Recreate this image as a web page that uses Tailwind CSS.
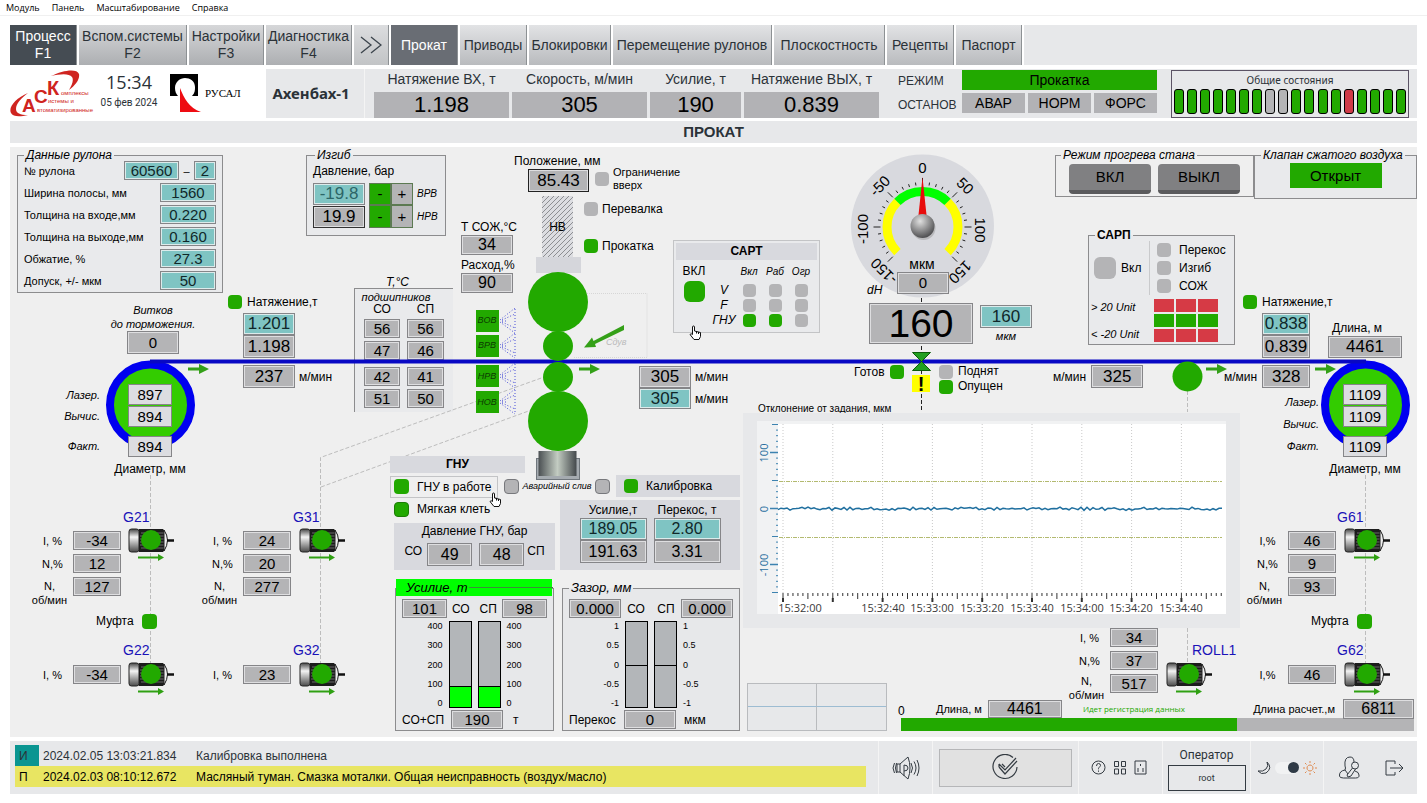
<!DOCTYPE html>
<html lang="ru">
<head>
  <meta charset="UTF-8">
  <meta name="viewport" content="width=device-width, initial-scale=1.0">
  <title>Ахенбах-1 - Прокат</title>
  <script src="https://cdn.jsdelivr.net/npm/@tailwindcss/browser@4"></script>
</head>
<body class="bg-white text-[#2b3238] font-['Liberation_Sans',sans-serif] min-h-screen">
  <!-- Menu -->
  <nav class="flex h-4 items-center gap-3 border-b border-[#f0f0f0] px-1.5 font-['Open_Sans',sans-serif] text-[9px] leading-4 text-black">
    <a href="#">Модуль</a>
    <a href="#">Панель</a>
    <a href="#">Масштабирование</a>
    <a href="#">Справка</a>
  </nav>

  <div class="px-[10px] pt-[9px]">
    <!-- Tabs -->
    <nav class="flex h-10 gap-0.5 text-[14px] leading-[17px] [&>button]:shrink-0 [&>button]:border-r [&>button]:border-[#8d9194] [&>button]:whitespace-nowrap">
      <button class="w-[67px] bg-[#454c53] text-white">Процесс<br>F1</button>
      <button class="w-[108px] bg-linear-to-b from-[#d6d7d9] to-[#adafb2]">Вспом.системы<br>F2</button>
      <button class="w-[75px] bg-linear-to-b from-[#d6d7d9] to-[#adafb2]">Настройки<br>F3</button>
      <button class="w-[86px] bg-linear-to-b from-[#d6d7d9] to-[#adafb2]">Диагностика<br>F4</button>
      <button class="flex w-[35px] items-center justify-center bg-linear-to-b from-[#dcdddf] to-[#c2c4c6]" aria-label="Далее">
        <svg width="22" height="18" viewBox="0 0 22 18" fill="none" stroke="#3b444c" stroke-width="1.3"><path d="M1 1l10 8-10 8M11 1l10 8-10 8"/></svg>
      </button>
      <button class="w-[67px] bg-[#696d74] text-white">Прокат</button>
      <button class="w-[67px] bg-linear-to-b from-[#e2e3e5] to-[#b9bbbe]">Приводы</button>
      <button class="w-[82px] bg-linear-to-b from-[#e2e3e5] to-[#b9bbbe]">Блокировки</button>
      <button class="w-[159px] bg-linear-to-b from-[#e2e3e5] to-[#b9bbbe]">Перемещение рулонов</button>
      <button class="w-[111px] bg-linear-to-b from-[#e2e3e5] to-[#b9bbbe]">Плоскостность</button>
      <button class="w-[67px] bg-linear-to-b from-[#e2e3e5] to-[#b9bbbe]">Рецепты</button>
      <button class="w-[66px] bg-linear-to-b from-[#e2e3e5] to-[#b9bbbe]">Паспорт</button>
      <div class="flex-1 bg-[#e7e8ea]"></div>
    </nav>

    <!-- Header -->
    <header class="mt-1 flex h-[49px]">
      <div class="flex w-[256px] shrink-0">
        <svg width="84" height="49" viewBox="0 0 84 49" fill="#cf2420" class="font-bold">
          <path d="M18 24C6 29-2 38 1 44c2 4 9 4 17 2-8 0-12-2-12-6 0-5 5-11 12-16z"/>
          <path d="M41 7C53 1 67-1 69 5c1 5-3 11-10 16 3-5 5-10 3-13-3-4-12-3-21-1z"/>
          <text x="12" y="43" font-size="19">А</text>
          <text x="24" y="34" font-size="19">С</text>
          <text x="37" y="26" font-size="20">К</text>
          <g font-size="6" font-weight="400">
            <text x="51" y="26">омплексы</text>
            <text x="38" y="34">истемы и</text>
            <text x="27" y="43">втоматизированные</text>
          </g>
        </svg>
        <div class="w-[70px] text-center">
          <p class="font-['Open_Sans',sans-serif] text-[18px] leading-[26px]">15:34</p>
          <p class="font-[Roboto,sans-serif] text-[10px] leading-4">05 фев 2024</p>
        </div>
        <div class="flex items-center gap-1 pl-1.5 text-black">
          <svg width="31" height="40" viewBox="0 0 31 40">
            <path d="M0 0h28v22h-6c3-3 3-6 3-9 0-6-5-9-10-9S5 8 5 14c0 3 1 6 3 8H0z"/>
            <path d="M10 14c4 10 9 20 21 24H10z" fill="#ee0c12"/>
          </svg>
          <span class="font-['Liberation_Serif',serif] text-[11px]">РУСАЛ</span>
        </div>
      </div>
      <div class="flex flex-1 bg-[#e7e8ea]">
        <div class="flex w-[99px] items-center justify-center border-r border-[#f4f4f4] pr-2 font-['Noto_Sans',sans-serif] text-[15px] font-bold">Ахенбах-1</div>
        <dl class="ml-[9px] grid grid-cols-[135px_135px_91px_135px] gap-x-[3px] text-center [&_dt]:pt-px [&_dt]:text-[14px] [&_dt]:leading-[18px] [&_dd]:mt-1 [&_dd]:h-[26px] [&_dd]:bg-[#b2b2b5] [&_dd]:text-[22px] [&_dd]:leading-[26px] [&_dd]:text-black">
          <div><dt>Натяжение ВХ, т</dt><dd>1.198</dd></div>
          <div><dt>Скорость, м/мин</dt><dd>305</dd></div>
          <div><dt>Усилие, т</dt><dd>190</dd></div>
          <div><dt>Натяжение ВЫХ, т</dt><dd>0.839</dd></div>
        </dl>
        <div class="ml-[19px] w-[64px] text-[12px] leading-6">
          <p>РЕЖИМ</p>
          <p>ОСТАНОВ</p>
        </div>
        <div class="grid w-[195px] grid-cols-3 grid-rows-[20px_20px] gap-[3px] pt-px text-center text-[14px] leading-5 text-black">
          <div class="col-span-3 bg-[#22a900]">Прокатка</div>
          <button class="bg-[#b2b2b5]">АВАР</button>
          <button class="bg-[#b2b2b5]">НОРМ</button>
          <button class="bg-[#b2b2b5]">ФОРС</button>
        </div>
        <div class="mt-px mr-2 ml-auto h-12 w-[238px] border border-[#5b5365]">
          <p class="text-center font-['Noto_Sans',sans-serif] text-[10px] leading-[18px]">Общие состояния</p>
          <div id="states" class="flex justify-between px-0.5"></div>
        </div>
      </div>
    </header>

    <h1 class="mt-[3px] bg-[#e7e8ea] text-center text-[15px] leading-[22px] font-bold">ПРОКАТ</h1>

    <!-- Mimic of the mill -->
    <main class="relative mt-1 h-[590px] min-w-[1407px] bg-[#efefef] text-[12px] leading-4 text-black
      [&_output]:flex [&_output]:items-center [&_output]:justify-center [&_output]:border [&_output]:border-[#858588] [&_output]:bg-[#b4b4b6] [&_output]:text-[15px] [&_output]:inset-ring [&_output]:inset-ring-[#dedee0]
      [&_input]:border [&_input]:border-[#858588] [&_input]:bg-[#7fc4c3] [&_input]:p-0 [&_input]:text-center [&_input]:text-[15px] [&_input]:text-[#10282a] [&_input]:inset-ring [&_input]:inset-ring-[#dcebeb]">

      <!-- Bearings -->
      <section class="absolute top-[127px] left-[344px] w-[99px] text-center">
        <h2 class="pr-3 italic">Т,°С</h2>
        <div class="-mt-0.5 border-t border-l border-[#8c8c8e] bg-[#e9eaec] pb-1">
          <p class="pr-4 text-[11px] italic">подшипников</p>
          <div class="grid grid-cols-[36px_37px] justify-center gap-x-[7px] gap-y-[3px]">
            <span class="-mt-1 -mb-px">СО</span><span class="-mt-1 -mb-px">СП</span>
            <output class="h-[19px]">56</output><output class="h-[19px]">56</output>
            <output class="h-[19px]">47</output><output class="h-[19px]">46</output>
            <output class="mt-1 h-[19px]">42</output><output class="mt-1 h-[19px]">41</output>
            <output class="h-[19px]">51</output><output class="h-[19px]">50</output>
          </div>
        </div>
      </section>

      <!-- Strip, rolls, reels, motors and gauge -->
      <svg class="pointer-events-none absolute top-0 left-0" width="1407" height="590" viewBox="10 147 1407 590">
        <defs>
          <linearGradient id="steel" x1="0" x2="0" y1="0" y2="1">
            <stop offset="0" stop-color="#444"/><stop offset=".35" stop-color="#f4f4f4"/><stop offset="1" stop-color="#4a4a4a"/>
          </linearGradient>
          <linearGradient id="piston">
            <stop offset="0" stop-color="#4b5053"/><stop offset=".5" stop-color="#c3ccc2"/><stop offset="1" stop-color="#44494c"/>
          </linearGradient>
          <radialGradient id="hub" cx=".4" cy=".3" r=".7">
            <stop offset="0" stop-color="#e0e0e0"/><stop offset="1" stop-color="#505052"/>
          </radialGradient>
          <pattern id="hatch" width="5" height="5" patternUnits="userSpaceOnUse">
            <rect width="5" height="5" fill="#dcdde1"/><path d="M0 5l5-5" stroke="#8d8e92"/>
          </pattern>
          <symbol id="motor" viewBox="0 0 46 40" width="46" height="40">
            <rect x="1" y="1" width="10" height="23" rx="2.500" fill="url(#steel)" stroke="#222"/>
            <path d="M11 1h24q4 4 4 11.500t-4 11.500h-24z" fill="#1c1c1c"/>
            <path d="M13 5h24M12 8h27M12 11h27M12 14h27M12 17h27M13 20h24" stroke="#7d7d7d" stroke-width=".8"/>
            <path d="M36 2q7 10 0 21z" fill="#eee" stroke="#222"/>
            <path d="M39 12.500h7" stroke="#111" stroke-width="2.500"/>
            <circle cx="23" cy="12" r="10" fill="#22a900"/>
            <path d="M10 29.500h21" stroke="#2fa012" stroke-width="2"/><path d="M30 26l6 3.500-6 3.500z" fill="#2fa012"/>
          </symbol>
          <symbol id="flow" viewBox="0 0 21 10" width="21" height="10">
            <path d="M0 3.500h11v-3.500l10 5-10 5v-3.500h-11z" fill="#34a018"/>
          </symbol>
          <symbol id="spray" viewBox="0 0 16 26" width="16" height="26">
            <path d="M0 12L15 0M2 12L15 6M2 13h6M2 14l13 6M0 14l15 11M15 1v24" fill="none" stroke="#4a50d8" stroke-dasharray="1 2"/>
          </symbol>
        </defs>

        <!-- drive links -->
        <g fill="none" stroke="#bdbdbd" stroke-dasharray="4 2">
          <path d="M150.500 475V665M320.500 665V457.500L558 372M321 487L545 405M1365.500 475V665M1187.500 391V412M1187.500 628V665"/>
        </g>
        <path d="M573 293.500H647V357.500H573" fill="none" stroke="#d6d6d6" stroke-dasharray="1 1"/>

        <!-- reels -->
        <g fill="#33cc00" stroke="#0000f0" stroke-width="8">
          <circle cx="150.500" cy="405" r="40.500"/><circle cx="1365.500" cy="405" r="40.500"/>
        </g>
        <path d="M150 361.500H1366" stroke="#0808c4" stroke-width="4"/>

        <!-- screw-down and rolls -->
        <rect x="542" y="196" width="31" height="61" fill="url(#hatch)"/>
        <text x="557.500" y="231" text-anchor="middle" font-size="12">НВ</text>
        <rect x="536" y="257" width="45" height="16" fill="#d5d6db"/>
        <rect x="536.500" y="458.500" width="43" height="21" fill="#a5abb0" stroke="#6f767c"/>
        <rect x="538.500" y="451" width="38" height="25" fill="url(#piston)"/>
        <g fill="#22a900">
          <circle cx="558" cy="302" r="30"/><circle cx="558" cy="346" r="15"/>
          <circle cx="558" cy="377" r="15"/><circle cx="558" cy="421" r="30"/>
          <circle cx="1187.500" cy="376.500" r="15"/>
        </g>
        <path d="M624 325v5l-29 14 1 3-12 .5 8-10 1.500 3.500z" fill="#34a018"/>
        <text x="606" y="345" font-size="9" font-style="italic" fill="#bbb">Сдув</text>
        <use href="#flow" x="188" y="364"/><use href="#flow" x="579" y="364"/>
        <use href="#flow" x="1206" y="364"/><use href="#flow" x="1315" y="364"/>

        <!-- coolant headers -->
        <use href="#spray" x="500" y="308"/><use href="#spray" x="500" y="333"/>
        <use href="#spray" x="500" y="363"/><use href="#spray" x="500" y="389"/>
        <path d="M476 310h23v22h-23zM476 335h23v22h-23zM476 365h23v22h-23zM476 391h23v22h-23z" fill="#22a900"/>
        <g font-size="9" font-style="italic" text-anchor="middle" fill="#0c3d00">
          <text x="487" y="323">ВОВ</text><text x="487" y="348">ВРВ</text>
          <text x="487" y="379">НРВ</text><text x="487" y="405">НОВ</text>
        </g>

        <!-- deviation gauge -->
        <circle cx="922.500" cy="226" r="71.500" fill="#d8d9de"/>
        <g fill="none" stroke-width="9">
          <path d="M897.400 201.900A35.500 35.500 0 0 0 897.400 252.100" stroke="#ff0"/>
          <path d="M947.600 201.900A35.500 35.500 0 0 1 947.600 252.100" stroke="#ff0"/>
          <path d="M897.400 201.900A35.500 35.500 0 0 1 947.600 201.900" stroke="#0f0"/>
        </g>
        <g id="gaugeTicks" stroke="#222"></g>
        <g font-size="15" text-anchor="middle">
          <text x="922.500" y="173">0</text>
          <text transform="translate(965 186) rotate(45)" y="5">50</text>
          <text transform="translate(980 230) rotate(90)" y="5">100</text>
          <text transform="translate(960 272) rotate(135)" y="5">150</text>
          <text transform="translate(880 186) rotate(-45)" y="5">-50</text>
          <text transform="translate(863 229) rotate(-90)" y="5">-100</text>
          <text transform="translate(884 271) rotate(-135)" y="5">-150</text>
          <text x="922" y="269" font-size="14">мкм</text>
        </g>
        <path d="M922.500 177l4 38h-8z" fill="#e80c0c"/>
        <circle cx="923.500" cy="228" r="12" fill="#999" opacity=".5"/>
        <circle cx="922.500" cy="226" r="12" fill="url(#hub)"/>
        <path d="M921.500 298V411" stroke="#222" stroke-dasharray="4 2"/>
        <path d="M912.500 352.500h18l-9 9zM912.500 370.500h18l-9-9z" fill="#22a020" stroke="#0d5c0a"/>
        <rect x="912" y="375" width="18" height="17" fill="#ff0"/>
        <text x="921" y="391" font-size="20" font-weight="700" text-anchor="middle">!</text>

        <!-- motors -->
        <use href="#motor" x="128" y="528"/><use href="#motor" x="128" y="662"/>
        <use href="#motor" x="299" y="528"/><use href="#motor" x="299" y="662"/>
        <use href="#motor" x="1344" y="528"/><use href="#motor" x="1344" y="662"/>
        <use href="#motor" x="1166" y="662"/>
      </svg>

      <!-- Coil data -->
      <fieldset class="absolute top-[2px] left-[7px] w-[206px] border border-[#8c8c8e] bg-[#e9eaec] px-[6px]">
        <legend class="px-0.5 leading-3 italic">Данные рулона</legend>
        <div class="grid auto-rows-[19px] grid-cols-[1fr_auto] items-center gap-y-[3px] pb-[2px] text-[11px] whitespace-nowrap">
          <label for="coil">№ рулона</label>
          <div class="-ml-9 flex items-center justify-between">
            <input id="coil" class="h-[19px] w-[55px]" value="60560">
            <span class="w-[15px] text-center">–</span>
            <input aria-label="Часть рулона" class="h-[19px] w-[22px]" value="2">
          </div>
          <label for="width">Ширина полосы, мм</label><input id="width" class="h-[19px] w-[56px] justify-self-end" value="1560">
          <label for="thIn">Толщина на входе,мм</label><input id="thIn" class="h-[19px] w-[56px] justify-self-end" value="0.220">
          <label for="thOut">Толщина на выходе,мм</label><input id="thOut" class="h-[19px] w-[56px] justify-self-end" value="0.160">
          <label for="red">Обжатие, %</label><input id="red" class="h-[19px] w-[56px] justify-self-end" value="27.3">
          <label for="tol">Допуск, +/- мкм</label><input id="tol" class="h-[19px] w-[56px] justify-self-end" value="50">
        </div>
      </fieldset>

      <!-- Bending -->
      <fieldset class="absolute top-[2px] left-[296px] w-[140px] border border-[#8c8c8e] bg-[#e9eaec] px-[6px] pb-[7px]">
        <legend class="ml-0.5 px-0.5 leading-3 italic">Изгиб</legend>
        <p class="pt-0.5 pb-1">Давление, бар</p>
        <div class="grid grid-cols-[52px_22px_22px_auto] grid-rows-[22px_23px] items-center [&>button]:h-full [&>button]:border [&>button]:border-[#5c7a52]">
          <input aria-label="Изгиб ВРВ" class="h-[22px] w-[52px] text-[17px]! text-[#2c6668]!" value="-19.8">
          <button class="ml-1 -mr-1 bg-[#22a900] text-[15px]">-</button><button class="ml-1 -mr-1 bg-[#b4b4b6] text-[15px]">+</button>
          <span class="ml-2 text-[10px] italic">ВРВ</span>
          <output class="h-[22px] border-[#333]! text-[17px]!">19.9</output>
          <button class="ml-1 -mr-1 bg-[#22a900] text-[15px]">-</button><button class="ml-1 -mr-1 bg-[#b4b4b6] text-[15px]">+</button>
          <span class="ml-2 text-[10px] italic">НРВ</span>
        </div>
      </fieldset>

      <!-- Position -->
      <section class="absolute top-[6px] left-[504px]">
        <p>Положение, мм</p>
        <output class="ml-3.5 h-[23px] w-[61px] border-[#222]! text-[17px]!">85.43</output>
      </section>
      <div class="absolute top-[19px] left-[585px] flex items-center gap-1 text-[11px] leading-[13px]">
        <span class="size-[14px] rounded bg-[#b4b4b6]"></span><span>Ограничение<br>вверх</span>
      </div>
      <div class="absolute top-[54px] left-[574px] grid gap-[21px]">
        <div class="flex items-center gap-1"><span class="size-[14px] rounded bg-[#b4b4b6]"></span>Перевалка</div>
        <div class="flex items-center gap-1"><span class="size-[14px] rounded bg-[#22a900]"></span>Прокатка</div>
      </div>

      <!-- Coolant -->
      <section class="absolute top-[72px] left-[451px]">
        <p>Т СОЖ,°С</p>
        <output class="h-[20px] w-[52px] text-[16px]!">34</output>
        <p class="pt-0.5">Расход,%</p>
        <output class="h-[20px] w-[52px] text-[16px]!">90</output>
      </section>

      <!-- Entry tension -->
      <div class="absolute top-[147px] left-[218px] flex items-center gap-[5px]">
        <span class="size-[14px] rounded bg-[#22a900]"></span><label for="tenIn">Натяжение,т</label>
      </div>
      <div class="absolute top-[166px] left-[233px] w-[52px]">
        <input id="tenIn" class="block h-[22px] w-full text-[17px]!" value="1.201">
        <output class="h-[23px] text-[17px]!">1.198</output>
      </div>
      <div class="absolute top-[218px] left-[233px] flex items-center gap-1">
        <output class="h-[23px] w-[52px] text-[17px]!">237</output>м/мин
      </div>
      <section class="absolute top-[156px] left-[93px] w-[100px] text-center text-[11px] leading-[14px] italic">
        <p>Витков<br>до торможения.</p>
        <output class="mx-auto h-[23px] w-[52px] not-italic">0</output>
      </section>

      <!-- Reel diameters -->
      <section class="absolute top-[237px] left-[50px] grid grid-cols-[40px_44px] items-center gap-x-7 text-right text-[11px] italic">
        <span>Лазер.</span><output class="h-[21px] bg-[#dcdde1]! not-italic">897</output>
        <span>Вычис.</span><output class="mt-px h-[21px] bg-[#dcdde1]! not-italic">894</output>
        <span class="mt-2">Факт.</span><output class="mt-[9px] h-[21px] bg-[#dcdde1]! not-italic">894</output>
      </section>
      <p class="absolute top-[314px] left-[95px] w-[90px] text-center">Диаметр, мм</p>
      <section class="absolute top-[237px] left-[1333px] w-[44px]">
        <output class="h-[21px] bg-[#dcdde1]!">1109</output>
        <output class="mt-px h-[21px] bg-[#dcdde1]!">1109</output>
        <output class="mt-[9px] h-[21px] bg-[#dcdde1]!">1109</output>
      </section>
      <div class="absolute top-[244px] left-[1269px] w-10 text-right text-[11px] leading-[22px] italic">
        <p>Лазер.</p><p>Вычис.</p><p>Факт.</p>
      </div>
      <p class="absolute top-[314px] left-[1310px] w-[90px] text-center">Диаметр, мм</p>

      <!-- САРТ -->
      <section class="absolute top-[93px] left-[663px] w-[147px] border border-[#c3c4c6] bg-[#e9eaec] p-0.5 pb-1">
        <h2 class="bg-[#d8d9de] text-center text-[12px] leading-[17px] font-bold">САРТ</h2>
        <div class="grid grid-cols-[36px_24px_26px_26px_26px] items-center justify-items-center pt-1 text-[10px] leading-[15px] italic">
          <span class="mb-1 text-[12px] not-italic">ВКЛ</span><span></span><span class="mb-1">Вкл</span><span class="mb-1">Раб</span><span class="mb-1">Огр</span>
          <span class="row-span-3 -mt-0.5 size-[21px] self-start rounded-md bg-[#22a900]"></span>
          <span class="text-[12px]">V</span><span class="size-[13px] rounded bg-[#b4b4b6]"></span><span class="size-[13px] rounded bg-[#b4b4b6]"></span><span class="size-[13px] rounded bg-[#b4b4b6]"></span>
          <span class="text-[12px]">F</span><span class="size-[13px] rounded bg-[#b4b4b6]"></span><span class="size-[13px] rounded bg-[#b4b4b6]"></span><span class="size-[13px] rounded bg-[#b4b4b6]"></span>
          <span class="text-[12px]">ГНУ</span><span class="size-[13px] rounded bg-[#22a900]"></span><span class="size-[13px] rounded bg-[#22a900]"></span><span class="size-[13px] rounded bg-[#b4b4b6]"></span>
        </div>
      </section>

      <!-- Speed at the stand -->
      <div class="absolute top-[219px] left-[629px] grid grid-cols-[52px_auto] items-center gap-x-1">
        <output class="h-[22px] text-[17px]!">305</output><span>м/мин</span>
        <input aria-label="Задание скорости" class="h-[21px] w-[52px] text-[17px]!" value="305"><span>м/мин</span>
      </div>

      <!-- Thickness -->
      <output class="absolute top-[125px] left-[887px] h-[22px] w-[52px]">0</output>
      <span class="absolute top-[135px] left-[857px] italic">dH</span>
      <output class="absolute top-[156px] left-[859px] h-[41px] w-[104px] text-[39px]!">160</output>
      <div class="absolute top-[158px] left-[970px] w-[52px] text-center">
        <input id="target" class="block h-[23px] w-full text-[17px]!" value="160">
        <label for="target" class="text-[11px] italic">мкм</label>
      </div>
      <div class="absolute top-[217px] left-[844px] flex items-center gap-[5px]">Готов<span class="size-[14px] rounded bg-[#22a900]"></span></div>
      <div class="absolute top-[217px] left-[929px] grid leading-[15px]">
        <div class="flex items-center gap-[5px]"><span class="size-[14px] rounded bg-[#b4b4b6]"></span>Поднят</div>
        <div class="flex items-center gap-[5px]"><span class="size-[14px] rounded bg-[#22a900]"></span>Опущен</div>
      </div>

      <!-- Warm-up -->
      <fieldset class="absolute top-[2px] left-[1045px] flex w-[191px] gap-[7px] border border-[#8c8c8e] px-[13px] pt-[3px] pb-0.5">
        <legend class="-ml-2 px-0.5 leading-3 italic">Режим прогрева стана</legend>
        <button class="h-[30px] w-[82px] rounded border-b-4 border-[#5a5a5c] bg-[#808082] text-[15px]">ВКЛ</button>
        <button class="h-[30px] w-[82px] rounded border-b-4 border-[#5a5a5c] bg-[#808082] text-[15px]">ВЫКЛ</button>
      </fieldset>
      <fieldset class="absolute top-[2px] left-[1244px] w-[163px] border border-[#8c8c8e] bg-[#e9eaec] pb-[10px]">
        <legend class="ml-[6px] px-0.5 leading-3 whitespace-nowrap italic">Клапан сжатого воздуха</legend>
        <div class="mx-auto mt-0.5 h-[25px] w-[92px] bg-[#22a900] text-center text-[15px] leading-[25px]">Открыт</div>
      </fieldset>

      <!-- САРП -->
      <fieldset class="absolute top-[82px] left-[1078px] w-[147px] border border-[#8c8c8e] bg-[#e9eaec] pb-[2px]">
        <legend class="ml-[6px] px-0.5 leading-3 font-bold">САРП</legend>
        <div class="flex">
          <div class="flex w-[61px] items-center gap-[5px] border-r border-[#c9cacc] pl-[5px]">
            <span class="size-[22px] rounded-md bg-[#b4b4b6]"></span>Вкл
          </div>
          <div class="ml-[7px] grid leading-[18px]">
            <div class="flex items-center gap-2"><span class="size-[14px] rounded bg-[#b4b4b6]"></span>Перекос</div>
            <div class="flex items-center gap-2"><span class="size-[14px] rounded bg-[#b4b4b6]"></span>Изгиб</div>
            <div class="flex items-center gap-2"><span class="size-[14px] rounded bg-[#b4b4b6]"></span>СОЖ</div>
          </div>
        </div>
        <div class="mt-1 flex gap-1 pl-0.5 text-[11px] italic">
          <div class="flex w-[59px] flex-col justify-between"><span>&gt; 20 Unit</span><span>&lt; -20 Unit</span></div>
          <div class="grid grid-cols-[20px_20px_20px] grid-rows-[13px_13px_13px] gap-0.5">
            <i class="bg-[#d63a45]"></i><i class="bg-[#d63a45]"></i><i class="bg-[#d63a45]"></i>
            <i class="bg-[#22a900]"></i><i class="bg-[#22a900]"></i><i class="bg-[#22a900]"></i>
            <i class="bg-[#d63a45]"></i><i class="bg-[#d63a45]"></i><i class="bg-[#d63a45]"></i>
          </div>
        </div>
      </fieldset>

      <!-- Exit tension -->
      <div class="absolute top-[147px] left-[1233px] flex items-center gap-[5px]">
        <span class="size-[14px] rounded bg-[#22a900]"></span><label for="tenOut">Натяжение,т</label>
      </div>
      <div class="absolute top-[166px] left-[1252px] w-[48px]">
        <input id="tenOut" class="block h-[22px] w-full text-[17px]!" value="0.838">
        <output class="h-[23px] text-[17px]!">0.839</output>
      </div>
      <div class="absolute top-[218px] left-[1043px] flex items-center gap-[5px]">м/мин<output class="h-[23px] w-[52px] text-[17px]!">325</output></div>
      <div class="absolute top-[218px] left-[1214px] flex items-center gap-[5px]">м/мин<output class="h-[23px] w-[48px] text-[17px]!">328</output></div>
      <section class="absolute top-[173px] left-[1318px] w-[74px]">
        <p class="pl-1">Длина, м</p>
        <output class="h-[22px] text-[17px]!">4461</output>
      </section>

      <!-- Motor readouts -->
      <span class="absolute top-[362px] left-[113px] text-[14px] text-[#1a12b8]">G21</span>
      <section class="absolute top-[384px] left-[20px] grid grid-cols-[39px_48px] gap-x-1 gap-y-[3px] text-center text-[11px] leading-5">
        <span class="pl-1.5">I, %</span><output class="h-[19px]">-34</output>
        <span class="pl-1.5">N,%</span><output class="h-[19px]">12</output>
        <span class="-mb-4 pt-0.5 leading-[14px]">N,<br>об/мин</span><output class="h-[19px]">127</output>
      </section>
      <div class="absolute top-[466px] left-[86px] flex items-center gap-2">Муфта<span class="size-[15px] rounded bg-[#22a900]"></span></div>
      <span class="absolute top-[495px] left-[113px] text-[14px] text-[#1a12b8]">G22</span>
      <div class="absolute top-[518px] left-[20px] grid grid-cols-[39px_48px] items-center gap-x-1 text-center text-[11px]"><span class="pl-1.5">I, %</span><output class="h-[19px]">-34</output></div>

      <span class="absolute top-[362px] left-[283px] text-[14px] text-[#1a12b8]">G31</span>
      <section class="absolute top-[384px] left-[190px] grid grid-cols-[39px_48px] gap-x-1 gap-y-[3px] text-center text-[11px] leading-5">
        <span class="pl-1.5">I, %</span><output class="h-[19px]">24</output>
        <span class="pl-1.5">N,%</span><output class="h-[19px]">20</output>
        <span class="-mb-4 pt-0.5 leading-[14px]">N,<br>об/мин</span><output class="h-[19px]">277</output>
      </section>
      <span class="absolute top-[495px] left-[283px] text-[14px] text-[#1a12b8]">G32</span>
      <div class="absolute top-[518px] left-[190px] grid grid-cols-[39px_48px] items-center gap-x-1 text-center text-[11px]"><span class="pl-1.5">I, %</span><output class="h-[19px]">23</output></div>

      <span class="absolute top-[362px] left-[1327px] text-[14px] text-[#1a12b8]">G61</span>
      <section class="absolute top-[384px] left-[1235px] grid grid-cols-[39px_48px] gap-x-1 gap-y-[3px] text-center text-[11px] leading-5">
        <span class="pl-1.5">I,%</span><output class="h-[19px]">46</output>
        <span class="pl-1.5">N,%</span><output class="h-[19px]">9</output>
        <span class="-mb-4 pt-0.5 leading-[14px]">N,<br>об/мин</span><output class="h-[19px]">93</output>
      </section>
      <div class="absolute top-[466px] left-[1301px] flex items-center gap-2">Муфта<span class="size-[15px] rounded bg-[#22a900]"></span></div>
      <span class="absolute top-[495px] left-[1327px] text-[14px] text-[#1a12b8]">G62</span>
      <div class="absolute top-[518px] left-[1235px] grid grid-cols-[39px_48px] items-center gap-x-1 text-center text-[11px]"><span class="pl-1.5">I,%</span><output class="h-[19px]">46</output></div>

      <span class="absolute top-[495px] left-[1182px] text-[14px] text-[#1a12b8]">ROLL1</span>
      <section class="absolute top-[481px] left-[1057px] grid grid-cols-[39px_48px] gap-x-1 gap-y-[3px] text-center text-[11px] leading-5">
        <span class="pl-1.5">I, %</span><output class="h-[19px]">34</output>
        <span class="pl-1.5">N,%</span><output class="h-[19px]">37</output>
        <span class="-mb-4 leading-[14px]">N,<br>об/мин</span><output class="h-[19px]">517</output>
      </section>

      <!-- Roll gap control -->
      <section class="absolute top-[309px] left-[380px] w-[350px] pb-1">
        <h2 class="w-[135px] bg-[#d8d9de] text-center text-[12px] leading-[17px] font-bold">ГНУ</h2>
        <div class="mt-0.5 flex h-[22px] items-center">
          <div class="mt-px flex h-[22px] w-[108px] items-center gap-2 border border-[#c3c4c6] pl-[3px]"><span class="size-[15px] shrink-0 rounded bg-[#22a900]"></span><span class="whitespace-nowrap">ГНУ в работе</span></div>
          <div class="flex flex-1 items-center justify-between px-[6px] text-[9px] whitespace-nowrap italic">
            <span class="size-[15px] rounded border border-[#77787c] bg-[#b4b4b6]"></span>Аварийный слив<span class="size-[15px] rounded border border-[#77787c] bg-[#b4b4b6]"></span>
          </div>
          <div class="flex h-[22px] w-[124px] items-center gap-2 bg-[#d8d9de] pl-2"><span class="size-[14px] rounded bg-[#22a900]"></span>Калибровка</div>
        </div>
        <div class="flex justify-between pt-[3px] pl-1">
          <div class="w-[161px]">
            <div class="flex h-[18px] items-center gap-2"><span class="size-[15px] rounded border border-[#1c7d05] bg-[#22a900]"></span>Мягкая клеть</div>
            <div class="mt-[5px] h-[47px] bg-[#d8d9de] text-center">
              <p>Давление ГНУ, бар</p>
              <div class="flex justify-center gap-[3px] pt-1"><span>СО</span><output class="mx-0.5 h-[23px] w-[45px] text-[16px]!">49</output><output class="ml-0.5 h-[23px] w-[45px] text-[16px]!">48</output><span>СП</span></div>
            </div>
          </div>
          <div class="grid w-[180px] grid-cols-[67px_67px] grid-rows-[18px_22px_23px] justify-center gap-x-[7px] bg-[#d8d9de] pb-[5px] text-center">
            <label for="force" class="leading-[20px]">Усилие,т</label><label for="skew" class="leading-[20px]">Перекос, т</label>
            <input id="force" class="w-full text-[16px]!" value="189.05"><input id="skew" class="w-full text-[16px]!" value="2.80">
            <output class="text-[16px]!">191.63</output><output class="text-[16px]!">3.31</output>
          </div>
        </div>
        <div class="flex justify-between pt-[12px] pl-[5px]">
          <fieldset class="relative h-[149px] w-[159px] border border-[#8c8c8e] bg-[#e7e8ea] px-1.5">
            <legend class="relative z-10 ml-0.5 px-0.5 text-[13px] leading-3 italic">Усилие, т</legend>
            <div class="absolute -top-[15px] left-0 h-[17px] w-[156px] bg-[#00ff00]"></div>
            <div class="absolute -top-[7px] right-0 w-[84px] border-t border-[#3c8c3c]"></div>
            <div class="grid grid-cols-[45px_1fr_1fr_45px] items-center pt-[5px] text-center"><output class="h-[19px]">101</output><span>СО</span><span>СП</span><output class="h-[19px]">98</output></div>
            <div class="mt-[3px] grid grid-cols-[1fr_23px_23px_1fr] gap-x-[6px] text-[9px]">
              <div class="flex flex-col justify-between text-right leading-[10px]"><span>400</span><span>300</span><span>200</span><span>100</span><span>0</span></div>
              <div class="flex h-[87px] flex-col justify-end border border-black bg-[#b3b6b9]"><div class="border-t border-black bg-[#00ff00]" style="height: 25%"></div></div>
              <div class="flex h-[87px] flex-col justify-end border border-black bg-[#b3b6b9]"><div class="border-t border-black bg-[#00ff00]" style="height: 25%"></div></div>
              <div class="flex flex-col justify-between leading-[10px]"><span>400</span><span>300</span><span>200</span><span>100</span><span>0</span></div>
            </div>
            <div class="mt-0.5 grid grid-cols-[49px_52px_1fr] items-center"><span>СО+СП</span><output class="h-[19px]">190</output><span class="pl-2.5">т</span></div>
          </fieldset>
          <fieldset class="h-[149px] w-[178px] border border-[#8c8c8e] bg-[#e7e8ea] px-1.5">
            <legend class="px-0.5 text-[13px] leading-3 italic">Зазор, мм</legend>
            <div class="grid grid-cols-[52px_1fr_1fr_52px] items-center pt-[5px] text-center"><output class="h-[19px]">0.000</output><span>СО</span><span>СП</span><output class="h-[19px]">0.000</output></div>
            <div class="mt-[3px] grid grid-cols-[1fr_23px_23px_1fr] gap-x-[6px] text-[9px]">
              <div class="flex flex-col justify-between text-right leading-[10px]"><span>1</span><span>0.5</span><span>0</span><span>-0.5</span><span>-1</span></div>
              <div class="flex h-[87px] flex-col justify-end border border-black bg-[#b3b6b9]"><div class="border-t border-black" style="height: 50%"></div></div>
              <div class="flex h-[87px] flex-col justify-end border border-black bg-[#b3b6b9]"><div class="border-t border-black" style="height: 50%"></div></div>
              <div class="flex flex-col justify-between leading-[10px]"><span>1</span><span>0.5</span><span>0</span><span>-0.5</span><span>-1</span></div>
            </div>
            <div class="mt-0.5 grid grid-cols-[55px_52px_1fr] items-center"><span>Перекос</span><output class="h-[19px]">0</output><span class="pl-2">мкм</span></div>
          </fieldset>
        </div>
      </section>

      <!-- Deviation chart -->
      <h2 class="absolute top-[256px] left-[748px] text-[10px] leading-3">Отклонение от задания, мкм</h2>
      <section class="absolute top-[266px] left-[733px] bg-[#e7e8ea] px-[14px] pt-2 pb-[14px]">
        <svg class="overflow-visible" width="469" height="193" viewBox="757 421 469 193">
          <rect x="757" y="421" width="469" height="193" fill="#f1f2f3"/>
          <rect x="778" y="424" width="448" height="190" fill="#fff"/>
          <g id="grid" stroke="#c9c9c9" stroke-dasharray="1 2"></g>
          <path d="M779 481.500H1222M779 537.500H1222" stroke="#b3ba70" stroke-dasharray="4 1 1 1"/>
          <g id="ticksY" stroke="#3d83b0"></g>
          <g id="ticksX" stroke="#333"></g>
          <polyline id="trend" fill="none" stroke="#1f6f9f" stroke-width="1.500"/>
          <g class="font-['Open_Sans',sans-serif]" font-size="11" text-anchor="middle" fill="#3a3a3a">
            <text x="800" y="612">15:32:00</text><text x="883" y="612">15:32:40</text><text x="932" y="612">15:33:00</text>
            <text x="982" y="612">15:33:20</text><text x="1032" y="612">15:33:40</text><text x="1082" y="612">15:34:00</text>
            <text x="1131" y="612">15:34:20</text><text x="1181" y="612">15:34:40</text>
          </g>
          <g class="font-['Open_Sans',sans-serif]" font-size="11" text-anchor="middle" fill="#2a6f9f">
            <text transform="translate(768 453) rotate(-90)">100</text><text transform="translate(768 509) rotate(-90)">0</text><text transform="translate(768 565) rotate(-90)">-100</text>
          </g>
        </svg>
      </section>

      <!-- Flatness preview -->
      <div class="absolute top-[536px] left-[737px] grid h-[48px] w-[140px] grid-cols-2 grid-rows-2 border border-[#b9bbbe] bg-[#e7e8ea]">
        <i class="border-r border-b border-r-[#b9bbbe] border-b-[#9dbcd2]"></i><i class="border-b border-[#9dbcd2]"></i><i class="border-r border-[#b9bbbe]"></i>
      </div>

      <!-- Length progress -->
      <section class="absolute top-[552px] left-[888px] w-[516px]">
        <div class="flex h-[19px] items-center text-[11px]">
          <span class="w-[38px] pt-1 text-[12px]">0</span>Длина, м
          <output class="ml-[6px] h-[18px] w-[74px] text-[16px]!">4461</output>
          <span class="ml-[21px] font-['Open_Sans',sans-serif] text-[8px] text-[#22a900]">Идет регистрация данных</span>
          <span class="ml-auto">Длина расчет.,м</span>
          <output class="ml-2 h-[20px] w-[71px] text-[16px]!">6811</output>
        </div>
        <div class="ml-[3px] h-[13px] bg-[#b4b4b6]" role="progressbar" aria-label="Длина" aria-valuenow="4461" aria-valuemax="6811"><div class="h-full bg-[#22a900]" style="width: 65.5%"></div></div>
      </section>

      <!-- Hand marks -->
      <svg class="absolute top-[178px] left-[679px]" width="13" height="15" viewBox="0 0 13 15" fill="#fff" stroke="#111"><path d="M3.500 9V2q0-1 1-1t1 1v4l6 1.500v4l-1.500 3h-5l-4-5q1-1.500 2.500 0zM7.500 6.500v2M9.500 7v2"/></svg>
      <svg class="absolute top-[345px] left-[479px]" width="13" height="15" viewBox="0 0 13 15" fill="#fff" stroke="#111"><path d="M3.500 9V2q0-1 1-1t1 1v4l6 1.500v4l-1.500 3h-5l-4-5q1-1.500 2.500 0zM7.500 6.500v2M9.500 7v2"/></svg>
    </main>

    <!-- Footer -->
    <footer class="mt-1 flex h-[53px] min-w-[1407px] bg-[#e7e8ea] text-[12px]">
      <table class="mt-1 ml-[5px] h-[42px] w-[851px] shrink-0 table-fixed text-left">
        <tbody>
          <tr class="h-[21px]"><td class="w-[24px] bg-[#0a9591] pl-1">И</td><td class="w-[157px] pl-1">2024.02.05 13:03:21.834</td><td>Калибровка выполнена</td></tr>
          <tr class="h-[21px] bg-[#e8e562] text-black"><td class="pl-1">П</td><td class="pl-1">2024.02.03 08:10:12.672</td><td>Масляный туман. Смазка моталки. Общая неисправность (воздух/масло)</td></tr>
        </tbody>
      </table>
      <div class="ml-3 flex flex-1 [&>div]:flex [&>div]:items-center [&>div]:justify-center [&>div]:border-l [&>div]:border-[#f4f4f4] [&_svg]:fill-none [&_svg]:stroke-[#343b42]">
        <div class="w-[54px]">
          <button aria-label="Звук">
            <svg width="29" height="24" viewBox="0 0 29 24"><path d="M6 8h3l8-7q4 11 0 22l-8-7H6zM3.500 7Q.5 12 3.500 17M5.500 7q-2 5 0 10M9 8v8M13 9v11M13 9q4 0 4 3t-4 3M20 7q3 5 0 10M23 5.500q4 6.500 0 13M26 4q4 8 0 16"/></svg>
          </button>
        </div>
        <div class="w-[146px]">
          <button aria-label="Квитировать" class="flex h-[38px] w-[133px] items-center justify-center border border-[#b5b6b8] bg-[#e1e1e1]">
            <svg width="27" height="27" viewBox="0 0 27 27" stroke-width="1.200"><path d="M21 3.500A12 12 0 1 0 25 13"/><path d="M7 13l6 7L25 7M7 10l6 6L24 4M7 10v3M10 10l3 3"/></svg>
          </button>
        </div>
        <div class="w-[84px] gap-[7px] pr-1">
          <button aria-label="Помощь"><svg width="15" height="15" viewBox="0 0 15 15"><circle cx="7.500" cy="7.500" r="6.500"/><path d="M5.500 6q0-2.500 2-2.500t2 2q0 1-1 1.500t-1 1.500v.8M7.500 10.500v1.300"/></svg></button>
          <button aria-label="Окна"><svg width="14" height="15" viewBox="0 0 14 15"><path d="M1.500 1.500h4v5h-4zM8.500 1.500h4v5h-4zM1.500 9h4v5h-4zM8.500 9h4v5h-4z"/></svg></button>
          <button aria-label="Тренды"><svg width="13" height="15" viewBox="0 0 13 15"><path d="M1 1h11v13H1zM4 8v4M9 8v4M6.500 4v2"/></svg></button>
        </div>
        <div class="w-[88px] flex-col">
          <label for="user" class="font-[Roboto,sans-serif] text-[12px] leading-[20px]">Оператор</label>
          <input id="user" class="h-[26px] w-[78px] border border-[#343b42] text-center font-[Roboto,sans-serif] text-[9px]" value="root">
        </div>
        <div class="w-[73px] gap-1">
          <svg width="14" height="14" viewBox="0 0 14 14"><path d="M10 1q6 6-1 11-5 2-8-2 5 1 8-2t1-7z"/></svg>
          <label class="relative flex h-3 w-6 items-center rounded-full bg-[#f1f2f3]"><input type="checkbox" checked aria-label="Светлая тема" class="peer absolute inset-0 opacity-0"><span class="ml-auto size-[11px] rounded-full bg-[#2f3a46]"></span></label>
          <svg width="14" height="14" viewBox="0 0 14 14"><path class="stroke-[#e08a50]" d="M7 4a3 3 0 1 0 .01 0M7 0v2M7 12v2M0 7h2M12 7h2M2 2l1.500 1.500M10.500 10.500L12 12M2 12l1.500-1.500M10.500 3.500L12 2"/></svg>
        </div>
        <div class="flex-1 gap-6">
          <button aria-label="Пользователь"><svg width="23" height="24" viewBox="0 0 23 24"><path d="M7 14Q1 15 1.500 20q0 2 4 2h12q4 0 3.500-3 0-3-4-4M7 14q1-2 0-4-1-9 5-9 4 0 4 5M7 14l3 4"/><circle cx="17" cy="9.500" r="3.500"/><path d="M14.500 12l-5.500 7 1 2 3-1 4.500-7"/></svg></button>
          <button aria-label="Выход"><svg width="19" height="16" viewBox="0 0 19 16"><path d="M10 4V1H1v14h9v-3M5 8h13M14 4l4 4-4 4"/></svg></button>
        </div>
      </div>
    </footer>
  </div>

  <script>
    // overall state lamps: g - ok, n - off, r - alarm
    const lamps = {
      g: "h-[25px] w-[10px] rounded-[3px] border border-black bg-[#22a900]",
      n: "h-[25px] w-[10px] rounded-[3px] border border-black bg-[#b4b4b6]",
      r: "h-[25px] w-[10px] rounded-[3px] border border-black bg-[#d03a48]"
    };
    document.getElementById("states").innerHTML =
      [..."gggggggnnggggrgggg"].map(s => `<span class="${lamps[s]}"></span>`).join("");

    const line = (x1, y1, x2, y2, w) => `<line x1="${x1}" y1="${y1}" x2="${x2}" y2="${y2}" stroke-width="${w || 1}"/>`;

    // gauge scale, -150..150 over 270 degrees
    let ticks = "";
    for (let v = -150; v <= 150; v += 10) {
      const a = v * 0.9 * Math.PI / 180;
      const r = v % 50 === 0 ? 49 : 45;
      ticks += line(922.5 + 42 * Math.sin(a), 227 - 42 * Math.cos(a), 922.5 + r * Math.sin(a), 227 - r * Math.cos(a));
    }
    document.getElementById("gaugeTicks").innerHTML = ticks;

    // chart axes
    let ty = "";
    for (let i = 0; i <= 30; i++) {
      const y = 424.5 + i * 5.6;
      const label = i === 5 || i === 15 || i === 25;
      ty += line(label ? 770 : i % 5 === 0 ? 772 : 776, y, 778, y, label ? 1.5 : 1);
    }
    document.getElementById("ticksY").innerHTML = ty;

    let tx = "";
    let grid = "";
    for (let i = 0; i < 90; i++) {
      const x = 783 + i * 4.98;
      if (x > 1224) break;
      tx += line(x, 593, x, i % 5 === 0 ? 599 : 596);
      if (i % 10 === 0) {
        tx += line(x, 598, x, 602, 2);
        grid += line(x, 424, x, 594);
      }
    }
    document.getElementById("ticksX").innerHTML = tx;
    document.getElementById("grid").innerHTML = grid;

    // thickness deviation stays within a few microns of the target
    const points = [];
    for (let x = 778; x <= 1222; x += 3) {
      points.push(x + "," + (508.7 + Math.sin(x * 0.9) * 0.8 + Math.sin(x * x * 0.013) * 0.8).toFixed(1));
    }
    document.getElementById("trend").setAttribute("points", points.join(" "));
  </script>
</body>
</html>
